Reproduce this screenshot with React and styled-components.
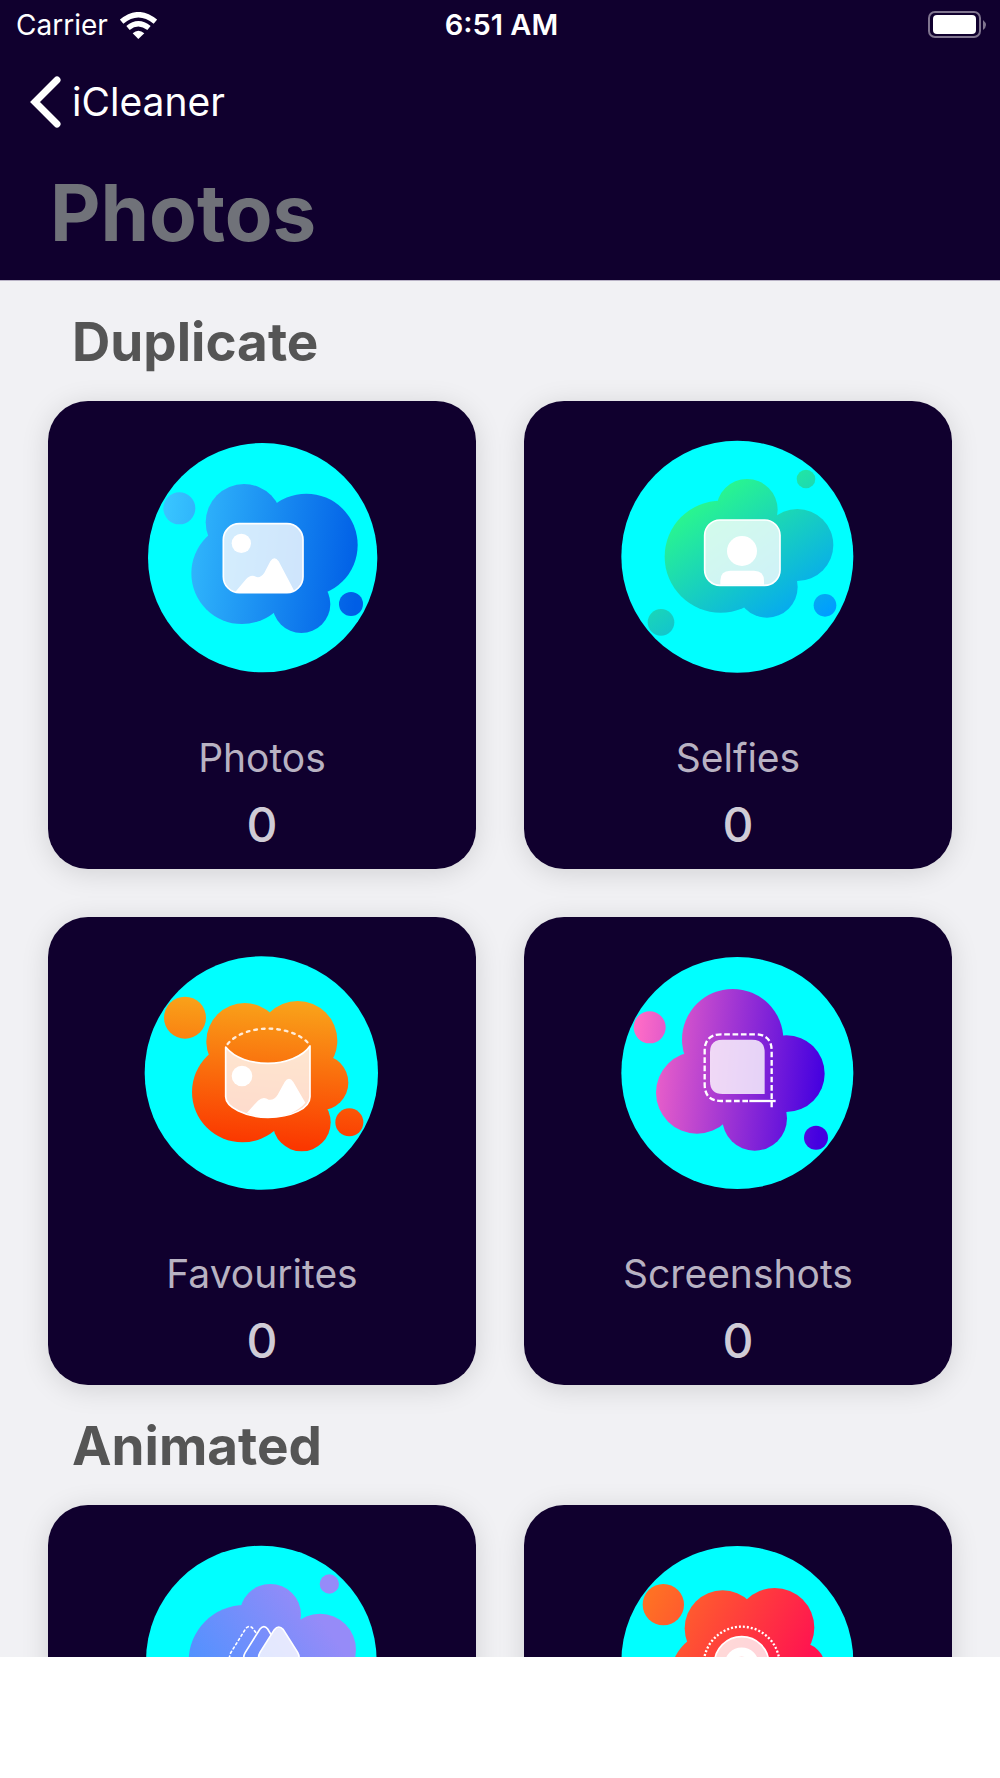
import React, { Fragment } from "react";
import styled, { createGlobalStyle } from "styled-components";

const GlobalStyle = createGlobalStyle`
  * {
    box-sizing: border-box;
  }
  body {
    margin: 0;
    background: #ffffff;
    font-family: Inter, "Liberation Sans", sans-serif;
  }
`;

const Screen = styled.div`
  display: flex;
  flex-direction: column;
  height: 100vh;
  padding-bottom: 121px;
  background: #ffffff;
`;

const Header = styled.header`
  flex: none;
  background: #10002e;
  border-bottom: 1px solid #b9b3c6;
`;

const StatusBar = styled.div`
  display: grid;
  grid-template-columns: 1fr auto 1fr;
  align-items: center;
  height: 50px;
  padding: 0 13px 0 16px;
  color: #ffffff;
  font-size: 28px;
  line-height: 50px;
`;

const Carrier = styled.div`
  display: flex;
  align-items: center;
  gap: 12px;
`;

const Clock = styled.time`
  font-size: 29px;
  font-weight: 600;
`;

const BatteryIcon = styled.svg`
  justify-self: end;
`;

const NavBar = styled.nav`
  display: flex;
  align-items: center;
  height: 104px;
  padding: 0 30px;
`;

const BackLink = styled.a`
  display: flex;
  align-items: center;
  gap: 10px;
  color: #ffffff;
  font-size: 39px;
  line-height: 52px;
  text-decoration: none;
`;

const PageTitle = styled.h1`
  margin: 0;
  padding: 0 50px 8px;
  color: #707279;
  font-size: 78px;
  font-weight: 700;
  line-height: 118px;
`;

const Content = styled.main`
  flex: 1;
  min-height: 0;
  overflow-y: auto;
  scrollbar-width: none;
  background: #f1f1f4;
`;

const SectionTitle = styled.h2`
  margin: 0;
  padding: 2px 72px 0;
  color: #555555;
  font-size: 53px;
  font-weight: 700;
  line-height: 118px;
`;

const CardGrid = styled.div`
  display: grid;
  grid-template-columns: 1fr 1fr;
  gap: 48px;
  padding: 0 48px;
`;

const Card = styled.button`
  display: flex;
  flex-direction: column;
  align-items: center;
  min-height: 468px;
  padding: 29px 16px 16px;
  border: 0;
  border-radius: 40px;
  background: #10002e;
  box-shadow: 0 4px 28px rgba(0, 0, 0, 0.13);
  font-family: inherit;
  cursor: pointer;
`;

const CardLabel = styled.span`
  margin-top: 54px;
  color: #b8b2c2;
  font-size: 39px;
  line-height: 48px;
`;

const CardCount = styled.span`
  margin-top: 15px;
  color: #d0ccd6;
  font-size: 48px;
  font-weight: 500;
  line-height: 56px;
`;

const Art = ({ id, viewBox, disc, from, to, stops, blobs, core, dots, children }) => (
  <svg width="250" height="250" viewBox={viewBox} aria-hidden="true">
    <defs>
      <linearGradient id={id} gradientUnits="userSpaceOnUse" x1={from[0]} y1={from[1]} x2={to[0]} y2={to[1]}>
        <stop offset="0" stopColor={stops[0]} />
        <stop offset="1" stopColor={stops[1]} />
      </linearGradient>
    </defs>
    <circle cx={disc[0]} cy={disc[1]} r={disc[2]} fill="#00ffff" />
    <g fill={`url(#${id})`}>
      <polygon points={core} />
      {[...blobs, ...dots].map(([x, y, r]) => (
        <circle key={`${x}-${y}`} cx={x} cy={y} r={r} />
      ))}
    </g>
    {children}
  </svg>
);

const PhotosArt = () => (
  <Art
    id="photos"
    viewBox="-9 0 750 750"
    disc={[368, 383, 344]}
    from={[70, 330]}
    to={[660, 400]}
    stops={["#38c4ff", "#005ee6"]}
    blobs={[[312, 277, 115], [499, 345, 154], [306, 430, 152], [484, 522, 87]]}
    core="312,277 499,345 484,522 306,430"
    dots={[[118, 235, 48], [633, 522, 36]]}
  >
    <rect x="250" y="281" width="239" height="207" rx="48" fill="#fff" fillOpacity="0.8" stroke="#fff" strokeWidth="5" />
    <circle cx="304" cy="340" r="29" fill="#fff" />
    <path d="M285 487 L318 448 Q332 431 350 441 Q362 444 373 428 L391 394 Q403 375 416 394 L463 483 Q450 489 438 489 H300 Z" fill="#fff" />
  </Art>
);

const SelfiesArt = () => (
  <Art
    id="selfies"
    viewBox="9 0 750 750"
    disc={[382, 380, 348]}
    from={[270, 180]}
    to={[570, 610]}
    stops={["#2cfb88", "#009dff"]}
    blobs={[[332, 380, 168], [411, 239, 92], [562, 345, 108], [471, 471, 92]]}
    core="332,380 411,239 562,345 471,471"
    dots={[[588, 147, 28], [645, 526, 34], [153, 577, 40]]}
  >
    <rect x="284" y="270" width="226" height="196" rx="46" fill="#fff" fillOpacity="0.8" stroke="#fff" strokeWidth="5" />
    <circle cx="396" cy="363" r="45" fill="#fff" />
    <path d="M331 464 V452 Q331 422 361 422 H432 Q462 422 462 452 V464 Z" fill="#fff" />
  </Art>
);

const FavouritesArt = () => (
  <Art
    id="favourites"
    viewBox="7 3 750 750"
    disc={[380, 384, 350]}
    from={[420, 160]}
    to={[390, 600]}
    stops={["#f9a51a", "#fb3700"]}
    blobs={[[330, 289, 115], [489, 287, 119], [323, 441, 151], [558, 413, 83], [501, 532, 87]]}
    core="330,289 489,287 558,413 501,532 323,441"
    dots={[[151, 218, 63], [644, 532, 42]]}
  >
    <path
      d="M273 306 C300 340 350 355 400 355 C450 355 505 335 526 303 V455 C526 490 470 517 400 517 C330 517 273 485 273 455 Z"
      fill="#fff"
      fillOpacity="0.8"
      stroke="#fff"
      strokeWidth="5"
      strokeLinejoin="round"
    />
    <path
      d="M279 297 C305 265 355 251 400 251 C445 251 495 265 521 295"
      fill="none"
      stroke="#ffecd9"
      strokeWidth="7"
      strokeDasharray="8 15"
      strokeLinecap="round"
    />
    <circle cx="322" cy="393" r="31" fill="#fff" />
    <path d="M337 503 L370 467 Q386 453 402 464 Q418 467 429 449 L450 411 Q463 392 476 411 L512 473 C490 500 450 517 400 517 C375 517 355 511 337 503 Z" fill="#fff" />
  </Art>
);

const ScreenshotsArt = () => (
  <Art
    id="screenshots"
    viewBox="9 3 750 750"
    disc={[382, 384, 348]}
    from={[70, 360]}
    to={[640, 410]}
    stops={["#ff6cc6", "#4400e0"]}
    blobs={[[368, 284, 152], [261, 443, 123], [529, 386, 115], [434, 520, 97]]}
    core="368,284 529,386 434,520 261,443"
    dots={[[119, 247, 48], [618, 578, 36]]}
  >
    <path d="M464 447 H338 Q300 447 300 409 V322 Q300 284 338 284 H426 Q464 284 464 322 Z" fill="#fff" fillOpacity="0.8" />
    <path
      d="M485 487 V318 Q485 268 435 268 H334 Q284 268 284 318 V418 Q284 468 334 468 H420"
      fill="none"
      stroke="#fff"
      strokeWidth="7"
      strokeDasharray="17 8"
    />
    <path d="M418 468 H497" stroke="#fff" strokeWidth="7" />
  </Art>
);

const LiveArt = () => (
  <Art
    id="live"
    viewBox="321 400 750 750"
    disc={[694, 781, 346]}
    from={[510, 860]}
    to={[850, 620]}
    stops={["#4d92ff", "#968bf8"]}
    blobs={[[644, 781, 168], [721, 642, 92], [870, 747, 108], [783, 873, 92]]}
    core="644,781 721,642 870,747 783,873"
    dots={[[898, 550, 29], [957, 928, 34], [465, 979, 40]]}
  >
    <g fill="none" stroke="#fff" strokeWidth="5" strokeLinecap="round">
      <path d="M677 695 L669 684 Q658 671 647 684 L603 755 Q594 771 603 787 L650 858" strokeDasharray="6 9" />
      <path d="M722 700 L713 685 Q702 671 690 685 L646 755 Q636 771 646 787 L692 858" />
    </g>
    <path
      d="M733 687 Q746 671 760 687 L803 755 Q812 771 803 787 L760 855 Q746 871 733 855 L690 787 Q681 771 690 755 Z"
      fill="#fff"
      fillOpacity="0.8"
      stroke="#fff"
      strokeWidth="5"
    />
  </Art>
);

const BurstArt = () => (
  <Art
    id="burst"
    viewBox="340 130 750 750"
    disc={[713, 514, 348]}
    from={[450, 320]}
    to={[890, 560]}
    stops={["#ff7024", "#ff1450"]}
    blobs={[[669, 413, 114], [825, 411, 119], [661, 567, 151], [896, 537, 83], [839, 656, 87]]}
    core="669,413 825,411 896,537 839,656 661,567"
    dots={[[491, 342, 62], [982, 656, 42]]}
  >
    <circle cx="726" cy="522" r="114" fill="none" stroke="#fff" strokeWidth="7" strokeDasharray="6 6" />
    <circle cx="726" cy="520" r="82" fill="#fff" fillOpacity="0.8" stroke="#fff" strokeWidth="5" />
    <circle cx="726" cy="522" r="38" fill="none" stroke="#fff" strokeWidth="27" />
  </Art>
);

const sections = [
  {
    title: "Duplicate",
    cards: [
      { id: "photos", label: "Photos", count: 0, art: PhotosArt },
      { id: "selfies", label: "Selfies", count: 0, art: SelfiesArt },
      { id: "favourites", label: "Favourites", count: 0, art: FavouritesArt },
      { id: "screenshots", label: "Screenshots", count: 0, art: ScreenshotsArt },
    ],
  },
  {
    title: "Animated",
    cards: [
      { id: "live", art: LiveArt },
      { id: "burst", art: BurstArt },
    ],
  },
];

const App = () => {
  return (
    <Fragment>
      <GlobalStyle />
      <Screen>
        <Header>
          <StatusBar>
            <Carrier>
              Carrier
              <svg width="37" height="27" viewBox="0 0 111 81" aria-hidden="true">
                <g fill="none" stroke="#fff" strokeWidth="16">
                  <path d="M5 29 Q55 -13 106 29" />
                  <path d="M24 48 Q55 23 87 48" />
                </g>
                <path d="M38 64 Q55 49 73 64 L55 81 Z" fill="#fff" />
              </svg>
            </Carrier>
            <Clock>6:51 AM</Clock>
            <BatteryIcon width="59" height="28" viewBox="0 0 59 28" aria-hidden="true">
              <rect x="1" y="1" width="51" height="25" rx="6" fill="none" stroke="#80758f" strokeWidth="2" />
              <rect x="5" y="4" width="43" height="19" rx="4" fill="#fff" />
              <path d="M55 9 Q61 14 55 19 Z" fill="#80758f" />
            </BatteryIcon>
          </StatusBar>
          <NavBar>
            <BackLink href="#">
              <svg width="32" height="52" viewBox="0 0 32 52" aria-hidden="true">
                <path d="M27 4 L5 26 L27 48" fill="none" stroke="#fff" strokeWidth="7" strokeLinecap="round" />
              </svg>
              iCleaner
            </BackLink>
          </NavBar>
          <PageTitle>Photos</PageTitle>
        </Header>
        <Content>
          {sections.map(({ title, cards }) => (
            <section key={title}>
              <SectionTitle>{title}</SectionTitle>
              <CardGrid>
                {cards.map(({ id, label, count, art: CardArt }) => (
                  <Card key={id} type="button">
                    <CardArt />
                    {label && (
                      <>
                        <CardLabel>{label}</CardLabel>
                        <CardCount>{count}</CardCount>
                      </>
                    )}
                  </Card>
                ))}
              </CardGrid>
            </section>
          ))}
        </Content>
      </Screen>
    </Fragment>
  );
};

export default App;
